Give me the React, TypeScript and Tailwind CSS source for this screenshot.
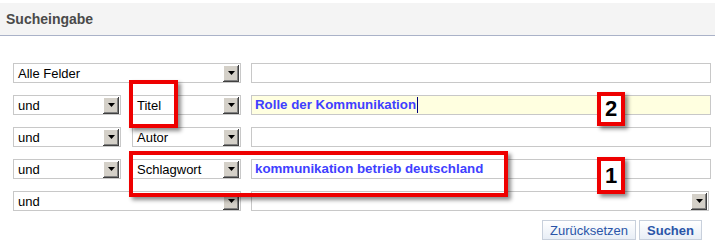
import React from "react";

function DropBtn() {
  return (
    <div className="flex h-[17px] w-[16px] shrink-0 items-center justify-center bg-[#d4d0c8] shadow-[inset_-1px_-1px_0_#404040,inset_1px_1px_0_#ffffff,inset_-2px_-2px_0_#808080]">
      <svg width="7" height="4" viewBox="0 0 7 4">
        <path d="M0 0H7L3.5 4Z" fill="#000" />
      </svg>
    </div>
  );
}

function Select({ label, w }: { label: string; w: string }) {
  return (
    <div className={`flex h-[20px] ${w} shrink-0 items-center justify-between border border-[#c8c8c8] bg-white pl-[4px] pr-[1px]`}>
      <span className="text-[13px] leading-none text-black">{label}</span>
      <DropBtn />
    </div>
  );
}

function Input({ value, yellow }: { value?: string; yellow?: boolean }) {
  return (
    <div className={`flex h-[20px] w-[460px] shrink-0 items-center border border-[#c8c8c8] pl-[3px] ${yellow ? "bg-[#ffffe0]" : "bg-white"}`}>
      {value && <span className="text-[13.3px] font-bold leading-none text-[#4040ff]">{value}</span>}
      {yellow && <span className="ml-[1px] h-[16px] w-px bg-[#000080]" />}
    </div>
  );
}

export default function App() {
  return (
    <div className="relative h-[248px] w-[715px] overflow-hidden bg-white font-['Liberation_Sans',Arial,sans-serif]">
      <div className="mt-[3px] flex h-[33px] items-center border-b border-[#aab2c8] bg-[#f4f4f4] pl-[6px]">
        <span className="text-[14px] font-bold text-[#4a4a4a]">Sucheingabe</span>
      </div>
      <div className="flex flex-col gap-[12px] pl-[13px] pt-[27px]">
        <div className="flex gap-[10px]">
          <Select label="Alle Felder" w="w-[228px]" />
          <Input />
        </div>
        <div className="flex gap-[10px]">
          <div className="flex gap-[11px]">
            <Select label="und" w="w-[108px]" />
            <Select label="Titel" w="w-[109px]" />
          </div>
          <Input value="Rolle der Kommunikation" yellow />
        </div>
        <div className="flex gap-[10px]">
          <div className="flex gap-[11px]">
            <Select label="und" w="w-[108px]" />
            <Select label="Autor" w="w-[109px]" />
          </div>
          <Input />
        </div>
        <div className="flex gap-[10px]">
          <div className="flex gap-[11px]">
            <Select label="und" w="w-[108px]" />
            <Select label="Schlagwort" w="w-[109px]" />
          </div>
          <Input value="kommunikation betrieb deutschland" />
        </div>
        <div className="flex gap-[10px]">
          <Select label="und" w="w-[228px]" />
          <Select label="" w="w-[458px]" />
        </div>
      </div>
      <div className="flex justify-end gap-[3px] pr-[13px] pt-[9px]">
        <button className="h-[20px] w-[94px] border border-[#c8d0dc] bg-gradient-to-b from-[#ffffff] to-[#e8eef6] text-[13px] leading-none text-[#2a55a8]">
          Zurücksetzen
        </button>
        <button className="h-[20px] w-[63px] border border-[#c8d0dc] bg-gradient-to-b from-[#ffffff] to-[#e8eef6] text-[13px] font-bold leading-none text-[#2a55a8]">
          Suchen
        </button>
      </div>

      <div className="pointer-events-none absolute left-[129px] top-[80px] h-[48px] w-[49px] border-[4px] border-[#ee0000] shadow-[3px_3px_4px_rgba(0,0,0,0.45)]" />
      <div className="pointer-events-none absolute left-[129px] top-[151px] h-[46px] w-[379px] border-[4px] border-[#ee0000] shadow-[3px_3px_4px_rgba(0,0,0,0.45)]" />
      <div className="absolute left-[597px] top-[92px] flex h-[34px] w-[28px] items-center justify-center border-[4px] border-[#ee0000] bg-white shadow-[3px_3px_4px_rgba(0,0,0,0.45)]">
        <span className="text-[22px] font-bold leading-none text-black">2</span>
      </div>
      <div className="absolute left-[597px] top-[157px] flex h-[37px] w-[28px] items-center justify-center border-[4px] border-[#ee0000] bg-white shadow-[3px_3px_4px_rgba(0,0,0,0.45)]">
        <span className="text-[22px] font-bold leading-none text-black">1</span>
      </div>
    </div>
  );
}
